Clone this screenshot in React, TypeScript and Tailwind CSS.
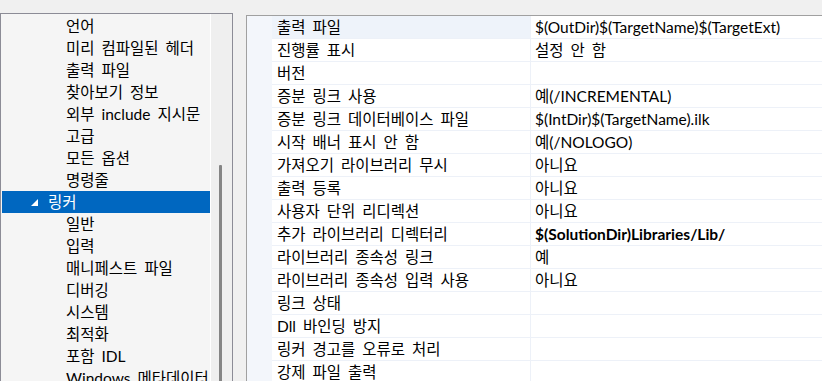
import React from 'react';

type Prop = { label: string; value?: string; bold?: boolean };

const treeBefore = ['언어', '미리 컴파일된 헤더', '출력 파일', '찾아보기 정보', '외부 include 지시문', '고급', '모든 옵션', '명령줄'];
const treeAfter = ['일반', '입력', '매니페스트 파일', '디버깅', '시스템', '최적화', '포함 IDL', 'Windows 메타데이터'];

const props: Prop[] = [
    { label: '출력 파일', value: '$(OutDir)$(TargetName)$(TargetExt)' },
    { label: '진행률 표시', value: '설정 안 함' },
    { label: '버전' },
    { label: '증분 링크 사용', value: '예(/INCREMENTAL)' },
    { label: '증분 링크 데이터베이스 파일', value: '$(IntDir)$(TargetName).ilk' },
    { label: '시작 배너 표시 안 함', value: '예(/NOLOGO)' },
    { label: '가져오기 라이브러리 무시', value: '아니요' },
    { label: '출력 등록', value: '아니요' },
    { label: '사용자 단위 리디렉션', value: '아니요' },
    { label: '추가 라이브러리 디렉터리', value: '$(SolutionDir)Libraries/Lib/', bold: true },
    { label: '라이브러리 종속성 링크', value: '예' },
    { label: '라이브러리 종속성 입력 사용', value: '아니요' },
    { label: '링크 상태' },
    { label: 'Dll 바인딩 방지' },
    { label: '링커 경고를 오류로 처리' },
    { label: '강제 파일 출력' },
];

const TreeItem: React.FC<{ text: string }> = ({ text }) => (
    <div className="h-[22px] leading-[22px] pl-[64px] whitespace-nowrap">{text}</div>
);

export default function App() {
    return (
        <div className="w-[822px] h-[381px] bg-[#f0f0f0] flex overflow-hidden text-[15.5px] text-black font-['Lato','Noto_Sans_CJK_KR',sans-serif] [word-spacing:3px]">
            {/* Category tree */}
            <div className="mt-[13px] w-[233px] shrink-0 border-l border-t border-r border-[#8c8c96] bg-[#f5f5f5] flex">
                <div className="w-[209px] pt-px pl-px flex flex-col overflow-hidden">
                    {treeBefore.map((t) => <TreeItem key={t} text={t} />)}
                    <div className="h-[22px] leading-[22px] bg-[#0067c0] text-white flex items-center">
                        <svg width="7" height="7" viewBox="0 0 7 7" className="ml-[29px] mr-[10px] mt-[1px]">
                            <polygon points="7,0 7,7 0,7" fill="#ffffff" />
                        </svg>
                        <span>링커</span>
                    </div>
                    {treeAfter.map((t) => <TreeItem key={t} text={t} />)}
                </div>
                <div className="w-px bg-white" />
                <div className="flex-1 bg-[#efefef] pl-[8px] pt-[151px]">
                    <div className="w-[3px] h-full bg-[#858585] rounded-t-[1px]" />
                </div>
            </div>

            {/* Property grid */}
            <div className="ml-[13px] mt-[15px] flex-1 border-l border-t border-[#a0a0a0] bg-[#f3f6fb] flex">
                <div className="w-[25px] shrink-0" />
                <div className="flex-1 bg-white flex flex-col">
                    {props.map((p, i) => (
                        <div key={p.label} className="h-[23px] flex border-b border-[#edf1f8] shrink-0">
                            <div className={`w-[258px] shrink-0 pl-[5px] leading-[22px] whitespace-nowrap ${i === 0 ? 'bg-[#eef3fa]' : ''}`}>{p.label}</div>
                            <div className="w-px bg-[#edf1f8]" />
                            <div className={`flex-1 pl-[4px] leading-[22px] whitespace-nowrap ${p.bold ? 'font-bold' : ''}`}>{p.value}</div>
                        </div>
                    ))}
                </div>
            </div>
        </div>
    );
}
